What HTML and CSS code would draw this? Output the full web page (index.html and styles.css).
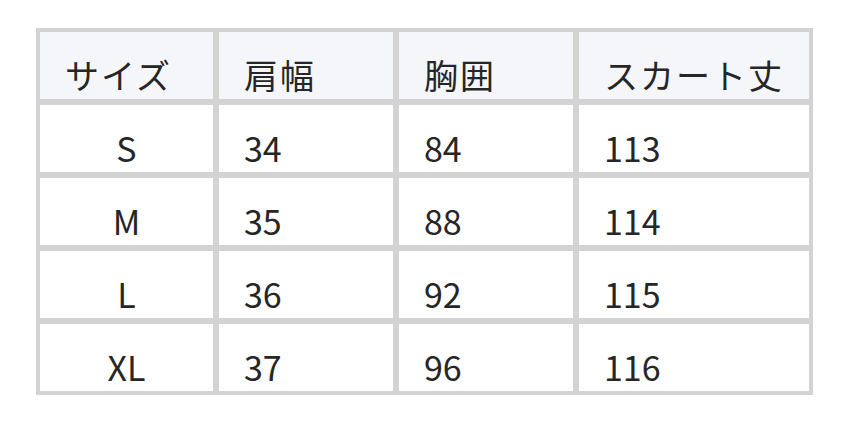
FILE: index.html
```html
<!DOCTYPE html>
<html lang="ja">
<head>
<meta charset="utf-8">
<link rel="stylesheet" href="styles.css">
</head>
<body>
<div class="wrap">
  <div class="table">
    <div class="cell head">サイズ</div>
    <div class="cell head">肩幅</div>
    <div class="cell head">胸囲</div>
    <div class="cell head">スカート丈</div>

    <div class="cell center">S</div>
    <div class="cell">34</div>
    <div class="cell">84</div>
    <div class="cell">113</div>

    <div class="cell center">M</div>
    <div class="cell">35</div>
    <div class="cell">88</div>
    <div class="cell">114</div>

    <div class="cell center">L</div>
    <div class="cell">36</div>
    <div class="cell">92</div>
    <div class="cell">115</div>

    <div class="cell center">XL</div>
    <div class="cell">37</div>
    <div class="cell">96</div>
    <div class="cell">116</div>
  </div>
</div>
</body>
</html>
```
FILE: styles.css
```css
html, body {
  margin: 0;
  padding: 0;
  background: #ffffff;
}
.wrap {
  padding: 28px 0 0 36px;
}
.table {
  display: grid;
  grid-template-columns: 173px 174px 174px 230px;
  grid-auto-rows: 67px;
  gap: 6px;
  padding: 4px;
  width: max-content;
  background: #d3d3d3;
  font-family: "Noto Sans CJK JP", "Noto Sans", sans-serif;
  font-size: 34px;
  color: #262626;
}
.cell {
  background: #ffffff;
  padding: 18px 25px 0;
  line-height: 49px;
  white-space: nowrap;
}
.cell.head {
  background: #f5f6fa;
  letter-spacing: 2px;
}
.cell.center {
  text-align: center;
  padding-left: 0;
  padding-right: 0;
}
```
